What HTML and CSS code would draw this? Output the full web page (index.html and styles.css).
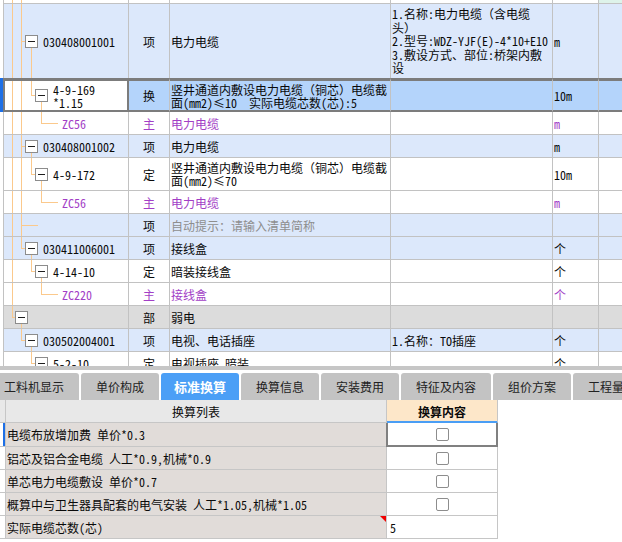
FILE: index.html
```html
<!DOCTYPE html>
<html lang="zh-CN">
<head>
<meta charset="utf-8">
<title>标准换算</title>
<link rel="stylesheet" href="styles.css">
</head>
<body>
<div class="app">
  <div class="grid">
    <div class="row r0">
      <div class="mk"></div>
      <div class="c c1"><svg class="tree" width="39" height="3"><path class="t" d="M8.5 0V3M17.5 0V3"/></svg></div>
      <div class="c c2"></div><div class="c c3"></div><div class="c c4"></div><div class="c c5"></div><div class="c c6 green"></div>
    </div>

    <div class="row r1 blue">
      <div class="mk"></div>
      <div class="c c1"><svg class="tree" width="39" height="74"><path class="t" d="M8.5 0V74M17.5 0V74M18 37.5H21M27.5 44V74"/><rect class="bx" x="21.5" y="31.5" width="12" height="12"/><path class="mn" d="M24 37.5H31"/></svg><span>030408001001</span></div>
      <div class="c c2">项</div>
      <div class="c c3">电力电缆</div>
      <div class="c c4 feat">1.名称:电力电缆（含电缆<br>头）<br>2.型号:WDZ-YJF(E)-4*10+E10<br>3.敷设方式、部位:桥架内敷<br>设</div>
      <div class="c c5">m</div>
      <div class="c c6"></div>
    </div>

    <div class="row sel">
      <div class="mk"></div>
      <div class="c c1"><svg class="tree" width="49" height="29"><path class="t" d="M8.5 0V29M17.5 0V29M27.5 0V14.5M28 14.5H31M37.5 21V29"/><rect class="bx" x="31.5" y="8.5" width="12" height="12"/><path class="mn" d="M34 14.5H41"/></svg><span>4-9-169<br>*1.15</span></div>
      <div class="c c2">换</div>
      <div class="c c3 wrap">竖井通道内敷设电力电缆（铜芯）电缆截面(mm2)≤10　实际电缆芯数(芯):5</div>
      <div class="c c4"></div>
      <div class="c c5">10m</div>
      <div class="c c6"></div>
    </div>

    <div class="row">
      <div class="mk"></div>
      <div class="c c1"><svg class="tree" width="58" height="22"><path class="t" d="M8.5 0V22M17.5 0V22M37.5 0V11.5M38 11.5H54"/></svg><span class="pu">ZC56</span></div>
      <div class="c c2 pu">主</div>
      <div class="c c3 pu">电力电缆</div>
      <div class="c c4"></div>
      <div class="c c5 pu">m</div>
      <div class="c c6"></div>
    </div>

    <div class="row blue">
      <div class="mk"></div>
      <div class="c c1"><svg class="tree" width="39" height="22"><path class="t" d="M8.5 0V22M17.5 0V22M18 11.5H21M27.5 18V22"/><rect class="bx" x="21.5" y="5.5" width="12" height="12"/><path class="mn" d="M24 11.5H31"/></svg><span>030408001002</span></div>
      <div class="c c2">项</div>
      <div class="c c3">电力电缆</div>
      <div class="c c4"></div>
      <div class="c c5">m</div>
      <div class="c c6"></div>
    </div>

    <div class="row dbl">
      <div class="mk"></div>
      <div class="c c1"><svg class="tree" width="49" height="32"><path class="t" d="M8.5 0V32M17.5 0V32M27.5 0V16.5M28 16.5H31M37.5 23V32"/><rect class="bx" x="31.5" y="10.5" width="12" height="12"/><path class="mn" d="M34 16.5H41"/></svg><span>4-9-172</span></div>
      <div class="c c2">定</div>
      <div class="c c3 wrap">竖井通道内敷设电力电缆（铜芯）电缆截面(mm2)≤70</div>
      <div class="c c4"></div>
      <div class="c c5">10m</div>
      <div class="c c6"></div>
    </div>

    <div class="row">
      <div class="mk"></div>
      <div class="c c1"><svg class="tree" width="58" height="22"><path class="t" d="M8.5 0V22M17.5 0V22M37.5 0V11.5M38 11.5H54"/></svg><span class="pu">ZC56</span></div>
      <div class="c c2 pu">主</div>
      <div class="c c3 pu">电力电缆</div>
      <div class="c c4"></div>
      <div class="c c5 pu">m</div>
      <div class="c c6"></div>
    </div>

    <div class="row blue">
      <div class="mk"></div>
      <div class="c c1"><svg class="tree" width="39" height="22"><path class="t" d="M8.5 0V22M17.5 0V22M18 11.5H34"/></svg></div>
      <div class="c c2">项</div>
      <div class="c c3 hint">自动提示：请输入清单简称</div>
      <div class="c c4"></div>
      <div class="c c5"></div>
      <div class="c c6"></div>
    </div>

    <div class="row blue">
      <div class="mk"></div>
      <div class="c c1"><svg class="tree" width="39" height="22"><path class="t" d="M8.5 0V22M17.5 0V11.5M18 11.5H21M27.5 18V22"/><rect class="bx" x="21.5" y="5.5" width="12" height="12"/><path class="mn" d="M24 11.5H31"/></svg><span>030411006001</span></div>
      <div class="c c2">项</div>
      <div class="c c3">接线盒</div>
      <div class="c c4"></div>
      <div class="c c5">个</div>
      <div class="c c6"></div>
    </div>

    <div class="row">
      <div class="mk"></div>
      <div class="c c1"><svg class="tree" width="49" height="22"><path class="t" d="M8.5 0V22M27.5 0V11.5M28 11.5H31M37.5 18V22"/><rect class="bx" x="31.5" y="5.5" width="12" height="12"/><path class="mn" d="M34 11.5H41"/></svg><span>4-14-10</span></div>
      <div class="c c2">定</div>
      <div class="c c3">暗装接线盒</div>
      <div class="c c4"></div>
      <div class="c c5">个</div>
      <div class="c c6"></div>
    </div>

    <div class="row">
      <div class="mk"></div>
      <div class="c c1"><svg class="tree" width="58" height="22"><path class="t" d="M8.5 0V22M37.5 0V11.5M38 11.5H54"/></svg><span class="pu">ZC220</span></div>
      <div class="c c2 pu">主</div>
      <div class="c c3 pu">接线盒</div>
      <div class="c c4"></div>
      <div class="c c5 pu">个</div>
      <div class="c c6"></div>
    </div>

    <div class="row gray">
      <div class="mk"></div>
      <div class="c c1"><svg class="tree" width="39" height="22"><path class="t" d="M8.5 0V11.5M9 11.5H11M17.5 18V22"/><rect class="bx" x="11.5" y="5.5" width="12" height="12"/><path class="mn" d="M14 11.5H21"/></svg></div>
      <div class="c c2">部</div>
      <div class="c c3">弱电</div>
      <div class="c c4"></div>
      <div class="c c5"></div>
      <div class="c c6"></div>
    </div>

    <div class="row blue">
      <div class="mk"></div>
      <div class="c c1"><svg class="tree" width="39" height="22"><path class="t" d="M17.5 0V11.5M18 11.5H21M27.5 18V22"/><rect class="bx" x="21.5" y="5.5" width="12" height="12"/><path class="mn" d="M24 11.5H31"/></svg><span>030502004001</span></div>
      <div class="c c2">项</div>
      <div class="c c3">电视、电话插座</div>
      <div class="c c4">1.名称：TO插座</div>
      <div class="c c5">个</div>
      <div class="c c6"></div>
    </div>

    <div class="row">
      <div class="mk"></div>
      <div class="c c1"><svg class="tree" width="49" height="22"><path class="t" d="M27.5 0V11.5M28 11.5H31M37.5 18V22"/><rect class="bx" x="31.5" y="5.5" width="12" height="12"/><path class="mn" d="M34 11.5H41"/></svg><span>5-2-10</span></div>
      <div class="c c2">定</div>
      <div class="c c3">电视插座 暗装</div>
      <div class="c c4"></div>
      <div class="c c5">个</div>
      <div class="c c6"></div>
    </div>
  </div>

  <div class="sep"></div>

  <div class="tabs">
    <div class="tab">工料机显示</div>
    <div class="tab">单价构成</div>
    <div class="tab on">标准换算</div>
    <div class="tab">换算信息</div>
    <div class="tab">安装费用</div>
    <div class="tab">特征及内容</div>
    <div class="tab">组价方案</div>
    <div class="tab">工程量明细</div>
  </div>

  <div class="conv">
    <div class="crow head">
      <div class="n"></div>
      <div class="l">换算列表</div>
      <div class="r">换算内容</div>
    </div>
    <div class="crow first">
      <div class="n mark"></div>
      <div class="l">电缆布放增加费 单价*0.3</div>
      <div class="r act"><span class="cb"></span></div>
    </div>
    <div class="crow">
      <div class="n"></div>
      <div class="l">铝芯及铝合金电缆 人工*0.9,机械*0.9</div>
      <div class="r"><span class="cb"></span></div>
    </div>
    <div class="crow">
      <div class="n"></div>
      <div class="l">单芯电力电缆敷设 单价*0.7</div>
      <div class="r"><span class="cb"></span></div>
    </div>
    <div class="crow">
      <div class="n"></div>
      <div class="l">概算中与卫生器具配套的电气安装 人工*1.05,机械*1.05</div>
      <div class="r"><span class="cb"></span></div>
    </div>
    <div class="crow">
      <div class="n"></div>
      <div class="l flag">实际电缆芯数(芯)</div>
      <div class="r val">5</div>
    </div>
  </div>
</div>
</body>
</html>
```

FILE: styles.css
```css
* { box-sizing: border-box; margin: 0; padding: 0; }

html, body {
  width: 622px;
  height: 542px;
  overflow: hidden;
  background: #fff;
}

body {
  font-family: "Noto Sans Mono CJK SC", "Noto Sans CJK SC", "DejaVu Sans Mono", monospace;
  font-size: 12px;
  color: #0a0a0a;
}

.app { width: 622px; height: 542px; overflow: hidden; }

/* ---------- top tree grid ---------- */
.grid { height: 366px; overflow: hidden; }

.row {
  display: grid;
  grid-template-columns: 3px 126px 41px 221px 162px 46px 40px;
  height: 23px;
}
.r0 { height: 4px; }
.r1 { height: 75px; }
.dbl { height: 33px; }

.c {
  display: flex;
  align-items: center;
  overflow: hidden;
  white-space: nowrap;
  line-height: 13px;
  border-right: 1px solid #c2c2c2;
  border-bottom: 1px solid #c2c2c2;
}
.c1 { border-left: 1px solid #c2c2c2; }
.c2 { justify-content: center; }
.c3, .c4, .c5 { padding-left: 1px; }
.wrap { white-space: normal; }
.feat { white-space: nowrap; line-height: 13.5px; }

.tree { display: block; flex: none; shape-rendering: crispEdges; }
.tree .t { stroke: #fbc98c; stroke-width: 1; fill: none; }
.tree .bx { fill: #fff; stroke: #8c8c8c; stroke-width: 1; }
.tree .mn { stroke: #1e1e1e; stroke-width: 1; fill: none; }

.blue .c { background: #dce8fb; }
.gray .c { background: #dcdcdc; }
.green { background: #def3ea; }

.sel { height: 34px; margin-top: -1px; }
.sel .mk { background: #1d6fe6; }
.sel .c {
  background: #b4d4fb;
  border-top: 3px solid #7c7c7c;
  border-bottom: 2px solid #7c7c7c;
}
.sel .c1 {
  background: #fff;
  border-left-color: #7c7c7c;
  border-right-color: #7c7c7c;
  box-shadow: inset 1px 0 0 #7c7c7c, inset -1px 0 0 #7c7c7c;
}

.pu { color: #a23ec6; }
.hint { color: #8e8e8e; }

/* ---------- tabs ---------- */
.sep { height: 4px; background: #c6c6c6; margin-bottom: 3px; }

.tabs {
  display: flex;
  gap: 2px;
  height: 27px;
  margin-left: -11px;
}
.tab {
  flex: none;
  padding: 0 15px;
  display: flex;
  align-items: center;
  background: #c3c3c3;
  border-radius: 3px 3px 0 0;
  font-family: "Noto Sans CJK SC", sans-serif;
  font-size: 12px;
  color: #222;
  white-space: nowrap;
}
.tab.on {
  background: #4b9ff6;
  color: #fff;
  font-weight: bold;
  font-size: 13px;
  padding: 0 13px;
}

/* ---------- conversion table ---------- */
.crow {
  display: grid;
  grid-template-columns: 6px 381px 111px;
  height: 23px;
}
.crow.first { height: 24px; }

.crow > div {
  border-right: 1px solid #c6c6c6;
  border-bottom: 1px solid #c6c6c6;
  display: flex;
  align-items: center;
  white-space: nowrap;
}
.crow .n { background: #fff; }
.crow .l { background: #e1dcd9; padding-left: 1px; }
.crow .r { background: #fff; justify-content: center; position: relative; }

.head .n, .head .l { background: #e8e8e8; }
.head .l { justify-content: center; padding-left: 0; }
.head .r {
  background: #fde7c9;
  font-weight: bold;
  border-bottom-color: #4a9ef5;
  box-shadow: inset 0 -1px 0 #4a9ef5;
}

.mark { box-shadow: inset -2px 0 0 #1d6fe6; }

.act::after {
  content: "";
  position: absolute;
  left: -1px;
  right: -1px;
  top: 0;
  bottom: -1px;
  border: 2px solid #808080;
  border-top: 0;
}

.cb {
  width: 13px;
  height: 13px;
  border: 1px solid #8d8d8d;
  border-radius: 2px;
  background: #fff;
}

.val { justify-content: flex-start !important; padding-left: 3px; }

.flag { position: relative; }
.flag::after {
  content: "";
  position: absolute;
  right: 0;
  top: 0;
  border-top: 6px solid #f00000;
  border-left: 6px solid transparent;
}
```
